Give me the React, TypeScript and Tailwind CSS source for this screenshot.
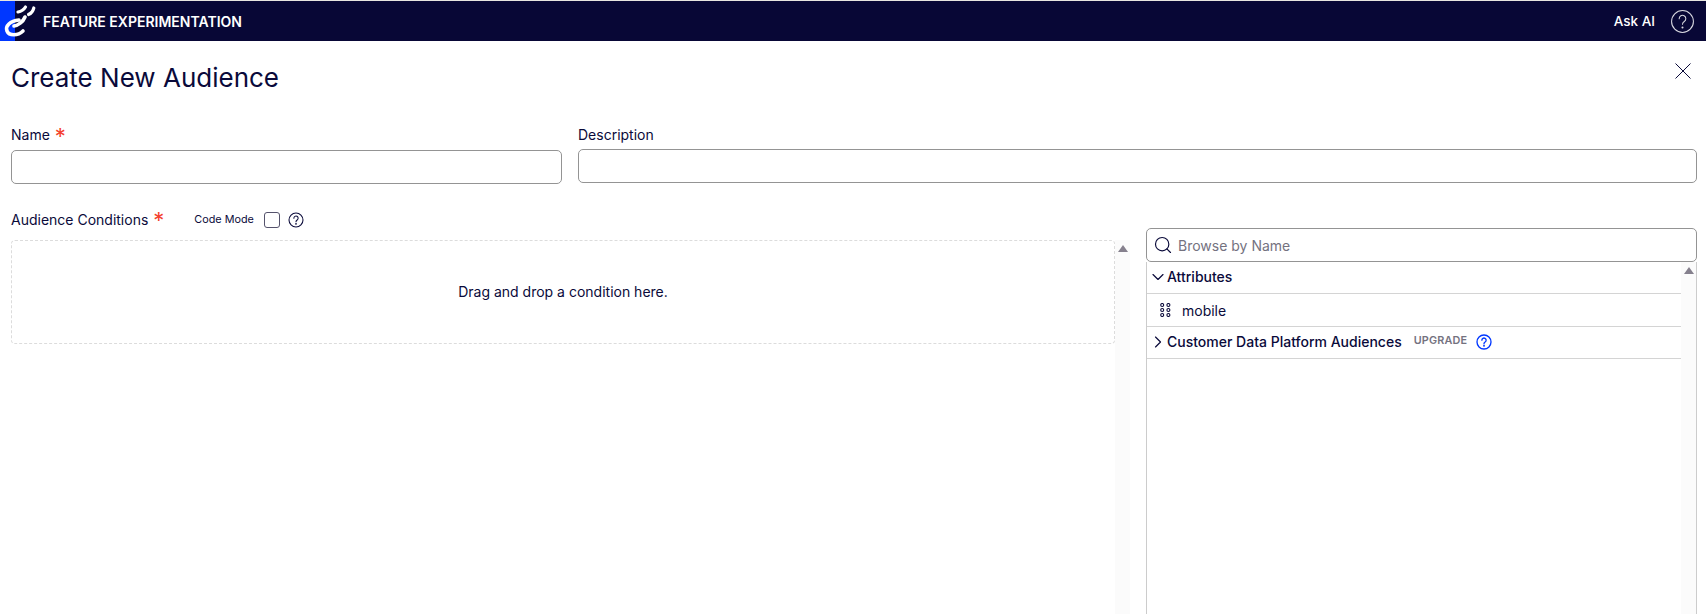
import React from 'react';
import { ChevronDown, ChevronRight, Search } from 'lucide-react';

const Logo = () => (
  <svg width="36" height="40" viewBox="0 0 36 40" fill="none" stroke="white" strokeLinecap="round" className="shrink-0">
    <path d="M19 19 C10 20 5 25 7 30 C9 35 18 35 23 30" strokeWidth="3.6" />
    <path d="M14 25 C18 24.5 23 21 25 16" strokeWidth="3.6" />
    <path d="M18 11 C21 10.5 24 8.5 25.5 6" strokeWidth="3.2" />
    <path d="M28.5 13.5 C31 12.5 33 10 33.8 7" strokeWidth="3.2" />
  </svg>
);

const HelpIcon = ({ size, color, width }: { size: number; color: string; width: number }) => (
  <svg width={size} height={size} viewBox="0 0 24 24" fill="none" stroke={color} strokeWidth={width} strokeLinecap="round">
    <circle cx="12" cy="12" r="10.5" />
    <path d="M8.8 9.3a3.2 3.2 0 1 1 4.9 2.7c-1 .7-1.7 1.3-1.7 2.6" />
    <circle cx="12" cy="17.8" r="0.5" fill={color} />
  </svg>
);

const DragDots = () => (
  <svg width="11" height="14" viewBox="0 0 11 14" fill="none" stroke="#0a0a3a" strokeWidth="1.1">
    {[2, 7, 12].map((y) => (
      <g key={y}>
        <circle cx="2.2" cy={y} r="1.5" />
        <circle cx="8.4" cy={y} r="1.5" />
      </g>
    ))}
  </svg>
);

const Required = () => <span className="text-[#f4402c] text-[22px] leading-[22px] h-[20px]">*</span>;

const ScrollTrack = ({ className }: { className: string }) => (
  <div className={`bg-[#fbfbfb] flex justify-center pt-[5px] ${className}`}>
    <div className="w-0 h-0 border-x-[5px] border-x-transparent border-b-[7px] border-b-[#85808d]" />
  </div>
);

export default function App() {
  return (
    <div className="w-[1706px] h-[614px] overflow-hidden bg-white text-[#0a0a3a] font-['Inter',sans-serif] flex flex-col">
      {/* Top bar */}
      <div className="h-px bg-[#e8e6e0]" />
      <header className="h-[40px] bg-[#080736] flex items-center text-white">
        <div className="relative w-[15px] h-full bg-[#0037ff]">
          <div className="absolute left-0 top-0">
            <Logo />
          </div>
        </div>
        <span className="ml-[28px] text-[14px] font-semibold">FEATURE EXPERIMENTATION</span>
        <span className="ml-auto text-[13.5px] font-medium">Ask AI</span>
        <div className="ml-[15px] mr-[11px]">
          <HelpIcon size={25} color="#d8d8e0" width={1} />
        </div>
      </header>

      <div className="flex-1 flex flex-col relative pl-[11px] pr-[9px] min-h-0">
        <button className="absolute right-[14px] top-[21px]">
          <svg width="18" height="18" viewBox="0 0 18 18" stroke="#0a0a3a" strokeWidth="1">
            <path d="M1.5 1.5l15 15M16.5 1.5l-15 15" />
          </svg>
        </button>
        <h1 className="text-[26px] leading-[32px] mt-[21px]">Create New Audience</h1>

        {/* Name and description */}
        <div className="flex gap-[16px] mt-[31px]">
          <div className="w-[551px]">
            <label className="flex gap-[5px] text-[14px] leading-[20px] h-[20px]">
              Name <Required />
            </label>
            <input className="mt-[5px] w-full h-[34px] border border-[#949494] rounded-[5px] bg-white" />
          </div>
          <div className="flex-1">
            <label className="block text-[14px] leading-[20px] h-[20px]">Description</label>
            <input className="mt-[4px] w-full h-[34px] border border-[#949494] rounded-[5px] bg-white" />
          </div>
        </div>

        {/* Conditions and browser */}
        <div className="flex flex-1 mt-[20px] min-h-0">
          <div className="w-[1104px] flex flex-col">
            <div className="flex items-center h-[30px]">
              <span className="text-[14px] flex gap-[5px]">
                Audience Conditions <Required />
              </span>
              <span className="ml-[30px] mt-[2px] text-[10.8px]">Code Mode</span>
              <span className="ml-[10px] mt-[2px] w-[16px] h-[16px] border border-[#55536c] rounded-[3px] bg-white" />
              <span className="ml-[8px] mt-[2px] flex">
                <HelpIcon size={16} color="#0a0a3a" width={1.6} />
              </span>
            </div>
            <div className="h-[104px] mt-[6px] pb-[2px] border border-dashed border-[#dcdcdc] rounded-[4px] flex items-center justify-center text-[14px]">
              Drag and drop a condition here.
            </div>
          </div>
          <ScrollTrack className="w-[15px] mt-[36px]" />
          <div className="ml-[16px] flex-1 flex flex-col min-w-0 mt-[24px]">
            <div className="h-[34px] border border-[#949494] rounded-[5px] flex items-center pl-[6px] text-[14px] text-[#74727f]">
              <Search size={20} strokeWidth={1.4} color="#0a0a3a" />
              <span className="ml-[5px]">Browse by Name</span>
            </div>
            <div className="flex-1 flex border-x border-[#cccccc] min-h-0">
              <div className="flex-1 min-w-0 text-[14px]">
                <div className="h-[32px] border-b border-[#d4d4d4] flex items-center font-medium pl-[1px] pb-[2px]">
                  <ChevronDown size={20} strokeWidth={1.4} />
                  <span className="-ml-px">Attributes</span>
                </div>
                <div className="h-[33px] border-b border-[#d4d4d4] flex items-center pl-[13px]">
                  <DragDots />
                  <span className="ml-[11px]">mobile</span>
                </div>
                <div className="h-[32px] border-b border-[#d4d4d4] flex items-center font-medium pl-[1px] pb-[2px]">
                  <ChevronRight size={20} strokeWidth={1.4} />
                  <span className="-ml-px">Customer Data Platform Audiences</span>
                  <span className="ml-[12px] text-[10.8px] font-semibold tracking-[0.2px] text-[#74727f]">UPGRADE</span>
                  <span className="ml-[9px] flex">
                    <HelpIcon size={16} color="#0037ff" width={2} />
                  </span>
                </div>
              </div>
              <ScrollTrack className="w-[15px]" />
            </div>
          </div>
        </div>
      </div>
    </div>
  );
}
